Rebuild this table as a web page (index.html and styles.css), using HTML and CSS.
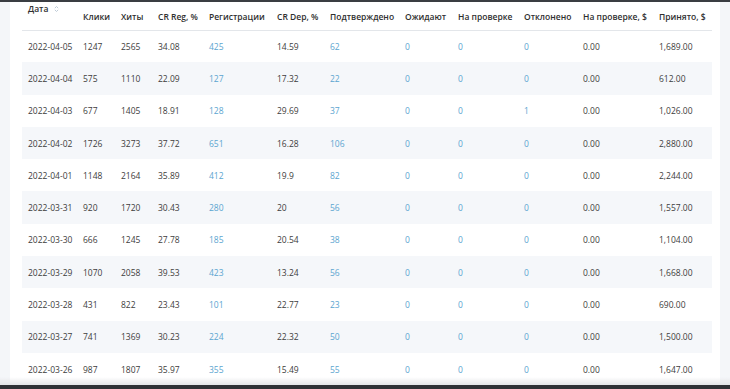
FILE: index.html
```html
<!DOCTYPE html>
<html lang="ru">
  <head>
    <meta charset="UTF-8" />
    <title>Статистика по дням</title>
    <link rel="stylesheet" href="styles.css">
  </head>
  <body>
    <div class="top-bar"></div>

    <div class="card">
      <table class="stats">
        <colgroup>
          <col class="c-date" />
          <col class="c-clicks" />
          <col class="c-hits" />
          <col class="c-crreg" />
          <col class="c-reg" />
          <col class="c-crdep" />
          <col class="c-conf" />
          <col class="c-wait" />
          <col class="c-check" />
          <col class="c-rej" />
          <col class="c-checkusd" />
          <col class="c-acc" />
        </colgroup>
        <thead>
          <tr>
            <th class="th-date">
              Дата
              <svg class="sort-icon" viewBox="0 0 6 9" width="5" height="8">
                <path d="M1 3.5 L3 1.5 L5 3.5" />
                <path d="M1 5.5 L3 7.5 L5 5.5" />
              </svg>
            </th>
            <th>Клики</th>
            <th>Хиты</th>
            <th>CR Reg, %</th>
            <th>Регистрации</th>
            <th>CR Dep, %</th>
            <th>Подтверждено</th>
            <th>Ожидают</th>
            <th>На проверке</th>
            <th>Отклонено</th>
            <th>На проверке, $</th>
            <th>Принято, $</th>
          </tr>
        </thead>
        <tbody id="rows"></tbody>
      </table>
    </div>

    <div class="bottom-shade"></div>

    <script>
      // date, clicks, hits, crReg, reg, crDep, confirmed, waiting, onCheck, rejected, onCheckUsd, accepted
      const data = [
        ["2022-04-05", 1247, 2565, "34.08", 425, "14.59", 62, 0, 0, 0, "0.00", "1,689.00"],
        ["2022-04-04", 575, 1110, "22.09", 127, "17.32", 22, 0, 0, 0, "0.00", "612.00"],
        ["2022-04-03", 677, 1405, "18.91", 128, "29.69", 37, 0, 0, 1, "0.00", "1,026.00"],
        ["2022-04-02", 1726, 3273, "37.72", 651, "16.28", 106, 0, 0, 0, "0.00", "2,880.00"],
        ["2022-04-01", 1148, 2164, "35.89", 412, "19.9", 82, 0, 0, 0, "0.00", "2,244.00"],
        ["2022-03-31", 920, 1720, "30.43", 280, "20", 56, 0, 0, 0, "0.00", "1,557.00"],
        ["2022-03-30", 666, 1245, "27.78", 185, "20.54", 38, 0, 0, 0, "0.00", "1,104.00"],
        ["2022-03-29", 1070, 2058, "39.53", 423, "13.24", 56, 0, 0, 0, "0.00", "1,668.00"],
        ["2022-03-28", 431, 822, "23.43", 101, "22.77", 23, 0, 0, 0, "0.00", "690.00"],
        ["2022-03-27", 741, 1369, "30.23", 224, "22.32", 50, 0, 0, 0, "0.00", "1,500.00"],
        ["2022-03-26", 987, 1807, "35.97", 355, "15.49", 55, 0, 0, 0, "0.00", "1,647.00"],
      ];

      // columns that are rendered as links
      const linkCols = [4, 6, 7, 8, 9];

      const tbody = document.getElementById("rows");
      data.forEach((row) => {
        const tr = document.createElement("tr");
        row.forEach((value, i) => {
          const td = document.createElement("td");
          if (linkCols.includes(i)) {
            td.innerHTML = `<a href="#">${value}</a>`;
          } else {
            td.textContent = value;
          }
          tr.appendChild(td);
        });
        tbody.appendChild(tr);
      });
    </script>
  </body>
</html>
```

FILE: styles.css
```css
:root {
  --bg: #f4f6f9;
  --card: #ffffff;
  --stripe: #f5f7fa;
  --border: #e3e6ea;
  --text: #3d3d3d;
  --head: #2f2f2f;
  --link: #5ba5d0;
}

* {
  box-sizing: border-box;
}

html,
body {
  height: 100%;
}

body {
  margin: 0;
  padding: 0 10px;
  background-color: var(--bg);
  font-family: "Open Sans", "Noto Sans", Arial, sans-serif;
  font-size: 8.5px;
  color: var(--text);
  overflow: hidden;
}

.top-bar {
  position: fixed;
  top: 0;
  left: 0;
  right: 0;
  height: 1.5px;
  background-color: #3a3d42;
  z-index: 2;
}

.card {
  background-color: var(--card);
  padding: 0 8px 0 12px;
  min-height: 100%;
}

.stats {
  width: 690px;
  border-collapse: collapse;
  table-layout: fixed;
}

.c-date { width: 55px; }
.c-clicks { width: 38px; }
.c-hits { width: 37px; }
.c-crreg { width: 51px; }
.c-reg { width: 68px; }
.c-crdep { width: 53px; }
.c-conf { width: 75px; }
.c-wait { width: 53px; }
.c-check { width: 66px; }
.c-rej { width: 59px; }
.c-checkusd { width: 76px; }
.c-acc { width: 59px; }

.stats th {
  height: 30px;
  padding: 4px 0 0 6px;
  text-align: left;
  font-weight: 600;
  color: var(--head);
  white-space: nowrap;
  border-bottom: 1px solid var(--border);
  vertical-align: middle;
}

.stats th.th-date {
  vertical-align: top;
  padding-top: 3px;
}

.sort-icon {
  margin-left: 3px;
  vertical-align: -1px;
  fill: none;
  stroke: #b9c6d3;
  stroke-width: 1.1;
}

.stats td {
  height: 32.3px;
  padding: 0 0 0 6px;
  white-space: nowrap;
  vertical-align: middle;
}

.stats tbody tr:nth-child(even) {
  background-color: var(--stripe);
}

.stats a {
  color: var(--link);
  text-decoration: none;
}

.stats a:hover {
  text-decoration: underline;
}

.bottom-shade {
  position: fixed;
  left: 0;
  right: 0;
  bottom: 0;
  height: 12px;
  background: linear-gradient(
    to bottom,
    rgba(235, 236, 238, 0) 0,
    rgba(225, 227, 230, 0.9) 8px,
    #2f3236 8.5px,
    #2f3236 100%
  );
  z-index: 2;
}
```
